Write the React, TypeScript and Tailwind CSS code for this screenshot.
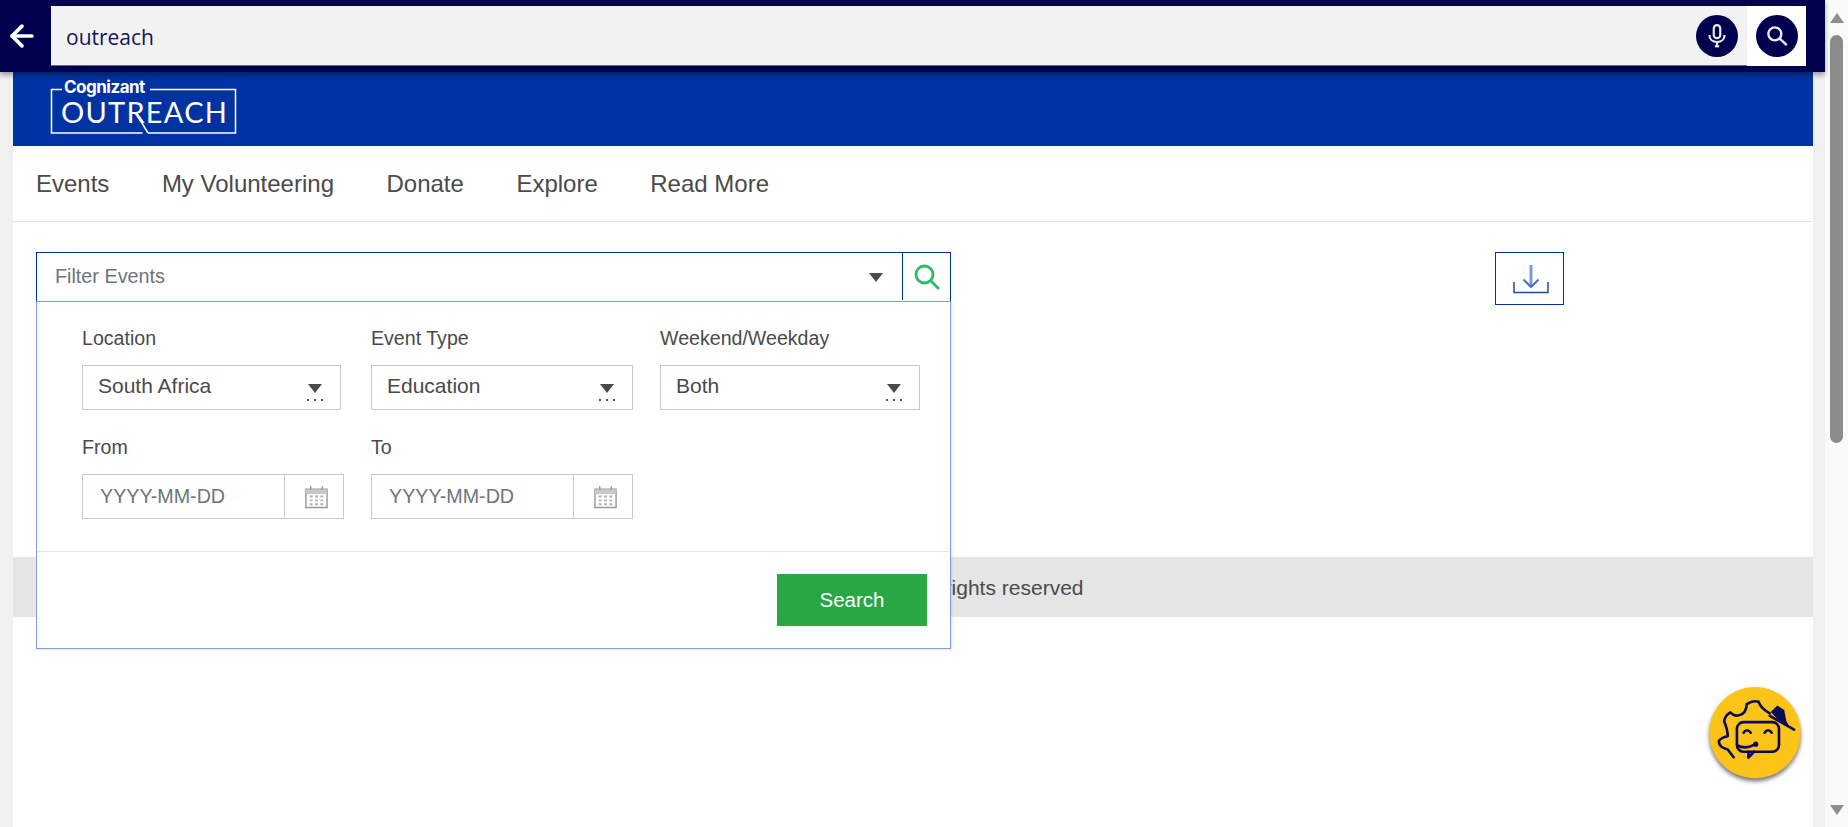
import { ArrowLeft } from 'lucide-react';

const sans = 'font-["Liberation_Sans",Arial,sans-serif]';

const Caret = () => (
  <div className="h-0 w-0 border-x-[7px] border-t-[9px] border-x-transparent border-t-[#4a4a4a]" />
);

const SelectField = ({ label, value, width }: { label: string; value: string; width: string }) => (
  <div className="flex flex-col">
    <label className="h-[38px] text-[19.6px] leading-[22px] text-[#4a4a4a]">{label}</label>
    <div className={`flex h-[45px] items-center justify-between border border-[#c8c8c8] pl-[15px] pr-[17px] ${width}`}>
      <span className="mt-[-4px] text-[21px] text-[#4a4a4a]">{value}</span>
      <div className="mt-[9px] flex flex-col items-center gap-[6px]">
        <Caret />
        <div className="flex gap-[5px]">
          <span className="size-[2px] bg-[#555]" />
          <span className="size-[2px] bg-[#555]" />
          <span className="size-[2px] bg-[#555]" />
        </div>
      </div>
    </div>
  </div>
);

const CalendarIcon = () => (
  <svg width="25" height="25" viewBox="0 0 26 26" fill="none" stroke="#9a9a9a">
    <path d="M2 5.5h22v19H2z" strokeWidth="1.5" />
    <path d="M2 5.5h22v5H2z" fill="#c8c8c8" stroke="none" />
    <path d="M7 2v4M19 2v4" strokeWidth="1.5" />
    <path
      d="M6 13h3M11.5 13h3M17 13h3M6 17h3M11.5 17h3M17 17h3M6 21h3M11.5 21h3M17 21h3"
      strokeWidth="2"
      stroke="#b0b0b0"
    />
  </svg>
);

const DateField = ({ label }: { label: string }) => (
  <div className="flex flex-col">
    <label className="h-[38px] text-[19.6px] leading-[22px] text-[#4a4a4a]">{label}</label>
    <div className="flex h-[45px] w-[262px] items-center border border-[#c8c8c8]">
      <span className="w-[202px] border-r border-[#c8c8c8] pl-[17px] text-[19.7px] leading-[43px] text-[#6c757d]">
        YYYY-MM-DD
      </span>
      <div className="flex flex-1 items-center justify-center pl-[5px]">
        <CalendarIcon />
      </div>
    </div>
  </div>
);

const OutreachLogo = () => (
  <svg width="190" height="64" viewBox="0 0 190 64" fill="none">
    <path d="M12 16.500H1.500v43.500h91M98 60h87.500V16.500H100" stroke="#fff" strokeWidth="1.500" />
    <text x="14" y="20" fill="#fff" fontFamily="Inter, sans-serif" fontWeight="700" fontSize="17" letterSpacing="-0.5">
      Cognizant
    </text>
    <text
      x="11"
      y="50"
      fill="#fff"
      fontFamily="Lato, sans-serif"
      fontWeight="400"
      fontSize="29"
      textLength="166"
      lengthAdjust="spacing"
    >
      OUTREACH
    </text>
    <path d="M87 42l11 18" stroke="#fff" strokeWidth="1.500" />
  </svg>
);

const ChatBot = () => (
  <svg
    width="92"
    height="92"
    viewBox="55 48 280 280"
    className="absolute left-[1709px] top-[687px] drop-shadow-[0_3px_2px_rgba(0,0,0,0.55)]"
  >
    <circle cx="195" cy="187" r="139" fill="#fcc419" />
    <g fill="none" stroke="#0a0a55" strokeWidth="8" strokeLinecap="round" strokeLinejoin="round">
      <path d="M130 262L112 238Q84 232 85 212Q92 202 112 198Q112 178 101 152Q104 134 120 125Q132 138 146 134Q168 130 170 100Q188 88 206 93Q212 112 240 128" />
      <path d="M240 136L314 178" />
      <rect x="140" y="155" width="128" height="90" rx="20" />
      <path d="M160 187Q171 172 182 187M224 187Q235 172 246 187" />
      <path d="M142 226Q165 238 192 224" />
      <path d="M192 245L175 263V245" />
    </g>
    <circle cx="197" cy="222" r="8" fill="#0a0a55" />
    <path d="M243 124L263 104L284 118L290 150L298 166L272 155Z" fill="#0a0a55" />
  </svg>
);

export default function App() {
  return (
    <div className={`relative flex h-[827px] w-full overflow-hidden bg-white ${sans}`}>
      <div className="flex w-[1825px] flex-col">
        {/* search bar on top */}
        <div className="relative z-10 flex h-[72px] items-center bg-[#00004f] pr-[19px] shadow-[0_3px_5px_rgba(0,0,0,0.35)]">
          <div className="flex w-[51px] justify-start pl-[5px]">
            <ArrowLeft size={34} color="#fff" strokeWidth={2.600} />
          </div>
          <div className="flex h-[60px] flex-1 items-center justify-between border-b border-[#6b6690] bg-[#f2f2f2] pl-[15px] pr-[9px] text-[#14145a]">
            <span className="mt-[5px] font-['Open_Sans',sans-serif] text-[21px]">outreach</span>
            <button className="flex size-[42px] items-center justify-center rounded-full bg-[#00004f]">
              <svg width="26" height="26" viewBox="0 0 24 24" fill="none" stroke="#ececec" strokeWidth="2">
                <rect x="9" y="2" width="6" height="12" rx="3" />
                <path d="M5 11c0 4 3 6.500 7 6.500s7-2.500 7-6.500M12 17.500V21" />
                <path d="M10 21.500h4" />
              </svg>
            </button>
          </div>
          <div className="flex h-[60px] w-[59px] items-center justify-center bg-white">
            <button className="flex size-[42px] items-center justify-center rounded-full bg-[#00004f]">
              <svg width="26" height="26" viewBox="0 0 24 24" fill="none" stroke="#ececec" strokeWidth="2.200">
                <circle cx="10" cy="10" r="6" />
                <path d="M14.500 14.500L21 20.500" />
              </svg>
            </button>
          </div>
        </div>

        <div className="flex flex-1 bg-[#f0f0f0] pl-[13px] pr-[12px]">
          <div className="flex flex-1 flex-col bg-white">
            {/* brand */}
            <div className="flex h-[74px] items-start bg-[#0033a1] pl-[37px] pt-[1px]">
              <OutreachLogo />
            </div>

            {/* nav */}
            <nav className="flex h-[76px] items-center gap-[52.500px] border-b border-[#e4e4e4] pl-[23px] text-[24px] text-[#4a4a4a]">
              <a>Events</a>
              <a>My Volunteering</a>
              <a>Donate</a>
              <a>Explore</a>
              <a>Read More</a>
            </nav>

            {/* filters */}
            <div className="flex h-[335px] items-start pl-[23px] pt-[30px]">
              <div className="relative z-[5] w-[915px]">
                <div className="flex h-[50px] border border-[#0033a1]">
                  <div className="flex flex-1 items-center justify-between pl-[18px] pr-[19px] text-[19.800px] text-[#6c757d]">
                    <span>Filter Events</span>
                    <Caret />
                  </div>
                  <div className="mb-[1px] flex w-[48px] items-center justify-center border-l border-[#0033a1]">
                    <svg width="26" height="26" viewBox="0 0 26 26" fill="none" stroke="#2dbb6a" strokeWidth="2.800">
                      <circle cx="10.500" cy="10.500" r="8.500" />
                      <path d="M16.500 16.500L25 25" />
                    </svg>
                  </div>
                </div>
                <div className="absolute left-0 top-full mt-[-1px] flex h-[348px] w-full flex-col border border-[#7f9fe0] bg-white shadow-[1px_1px_2px_rgba(0,0,0,0.1)]">
                  <div className="h-[250px] border-b border-[#e4e6ea] pl-[45px] pt-[25px]">
                    <div className="grid grid-cols-[262px_262px_260px] gap-x-[27px] gap-y-[26px]">
                      <SelectField label="Location" value="South Africa" width="w-[259px]" />
                      <SelectField label="Event Type" value="Education" width="w-[262px]" />
                      <SelectField label="Weekend/Weekday" value="Both" width="w-[260px]" />
                      <DateField label="From" />
                      <DateField label="To" />
                    </div>
                  </div>
                  <div className="flex justify-end pr-[23px] pt-[22px]">
                    <button className="h-[52px] w-[150px] bg-[#28a745] text-[20.500px] text-white">Search</button>
                  </div>
                </div>
              </div>
              <button className="ml-[544px] flex h-[53px] w-[69px] items-center justify-center border border-[#0033a1]">
                <svg width="36" height="30" viewBox="0 0 36 30" className="ml-[2px]" fill="none">
                  <path d="M18 1v22" stroke="#7d9ad8" strokeWidth="3" />
                  <path d="M10.500 15.500L18 23l7.500-7.500" stroke="#4a70c4" strokeWidth="2" />
                  <path d="M1 18v10.500h34V18" stroke="#1e4aa8" strokeWidth="1.500" />
                </svg>
              </button>
            </div>

            {/* copyright */}
            <div className="flex h-[60px] items-center justify-center bg-[#e5e5e5] pr-[6px] pt-[1px] text-[21px] text-[#4a4a4a]">
              © 2024 Cognizant. All rights reserved
            </div>
          </div>
        </div>
      </div>

      {/* scrollbar */}
      <div className="flex w-[23px] flex-col items-center bg-[#fafafa] pt-[13px]">
        <div className="h-0 w-0 border-x-[7px] border-b-[10px] border-x-transparent border-b-[#8f8f8f]" />
        <div className="mt-[12px] h-[408px] w-[13px] rounded-full bg-[#8b8b8b]" />
        <div className="mt-[362px] h-0 w-0 border-x-[7px] border-t-[10px] border-x-transparent border-t-[#8f8f8f]" />
      </div>

      <ChatBot />
    </div>
  );
}
